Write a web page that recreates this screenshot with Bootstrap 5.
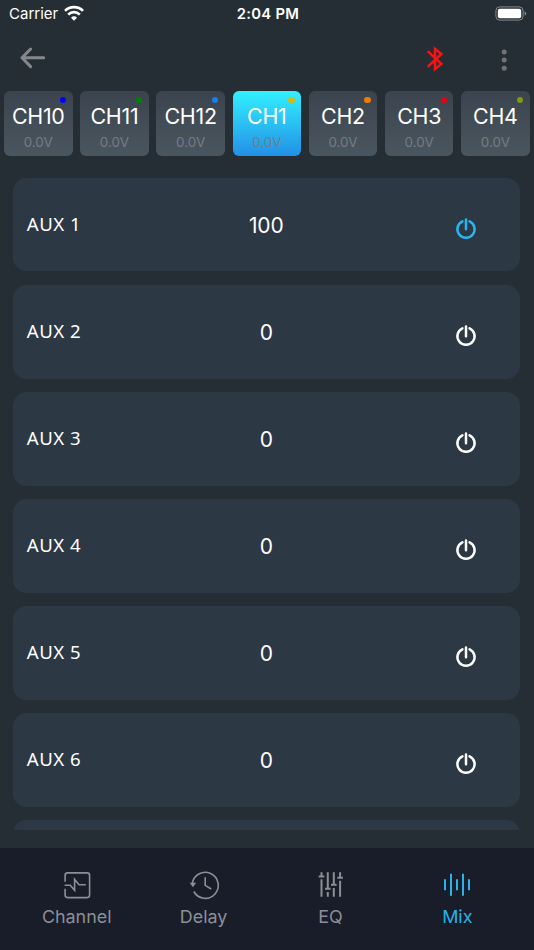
<!DOCTYPE html>
<html lang="en">
<head>
<meta charset="utf-8">
<meta name="viewport" content="width=device-width, initial-scale=1">
<title>Mix</title>
<link href="https://cdn.jsdelivr.net/npm/bootstrap@5.3.0/dist/css/bootstrap.min.css" rel="stylesheet">
<style>
  body { background: #262e35; font-family: Inter, "Liberation Sans", sans-serif; color: #fff; height: 950px; }
  svg { display: block; fill: none; flex: none; }
  .statusbar { height: 28px; padding: 0 7px 0 9px; font-size: 15px; line-height: 28px; }
  .statusbar > div { flex: 1 1 0; }
  .statusbar .clock { font-weight: 600; font-size: 14.8px; letter-spacing: .3px; }
  .wifi { margin-left: 5px; }
  .topbar { height: 62.5px; padding: 0 26px 0 20px; }
  .more { margin-left: 56px; }
  .strip { gap: 7.7px; padding: 0 4px; }
  .ch { width: 68.5px; height: 65px; flex: none; border-radius: 6px; padding-top: 12.8px; background: linear-gradient(#3b444e, #4a565f); }
  .ch.active { background: linear-gradient(#32f0ff, #2390e6); }
  .ch-name { font-size: 21.4px; line-height: 26px; letter-spacing: -.25px; }
  .ch-volt { font-size: 13.4px; line-height: 18px; margin-top: 4px; color: #747d85; }
  .dot { width: 6.4px; height: 6.4px; top: 6.6px; right: 6.4px; }
  .sends { margin: 22.8px 13.6px 0 13.3px; height: 651.7px; }
  .send { height: 93.2px; margin-bottom: 13.85px; border-radius: 13.5px; background: #2d3845; flex: none; }
  .send-name { font-family: "Noto Sans", sans-serif; font-size: 18.6px; letter-spacing: .5px; padding: 0 0 2px 13.5px; width: 186px; }
  .send-val { font-size: 21px; width: 134px; letter-spacing: -.1px; padding-top: 2px; }
  .send svg { margin: 6px 0 0 122px; stroke: #fff; }
  .send.on svg { stroke: #29b6ee; }
  .tabs { height: 102px; background: #181d29; padding: 21px 13.3px 0; color: #8d8f95; font-size: 17.9px; line-height: 24px; }
  .tab { flex: 1 1 0; gap: 4px; color: inherit; text-decoration: none; }
  .tab svg { stroke: currentColor; stroke-width: 1.6; }
  .tab.active { color: #29b3e8; }
</style>
<script src="https://cdn.jsdelivr.net/npm/bootstrap@5.3.0/dist/js/bootstrap.bundle.min.js"></script>
</head>
<body class="d-flex flex-column overflow-hidden">
  <header class="statusbar d-flex align-items-center">
    <div class="d-flex align-items-center"><span>Carrier</span>
      <svg class="wifi" width="22" height="18" viewBox="0 0 22 18" stroke="#fff" stroke-width="2.7"><path d="M2 5.9a12.8 12.8 0 0 1 18 0M5.2 9.6a8.2 8.2 0 0 1 11.6 0"/><path d="M11 15.8l-3-3.1a4.3 4.3 0 0 1 6 0z" fill="#fff" stroke="none"/></svg>
    </div>
    <div class="clock text-center">2:04 PM</div>
    <div class="d-flex justify-content-end">
      <svg width="32" height="16" viewBox="0 0 32 16"><rect x=".9" y=".9" width="27.2" height="13.2" rx="3.8" stroke="#858a8f"/><rect x="2.8" y="2.8" width="23.4" height="9.4" rx="2" fill="#fff"/><path d="M29.6 5.2q1.6.8 1.6 2.3t-1.6 2.3z" fill="#858a8f"/></svg>
    </div>
  </header>

  <nav class="topbar d-flex align-items-center">
    <svg width="26" height="24" viewBox="0 0 26 24" stroke="#85878a" stroke-width="3" stroke-linecap="round" stroke-linejoin="round"><path d="M23.7 10.8H2M10.6 2L2 10.8l8.6 8.8"/></svg>
    <svg class="ms-auto" width="18" height="26" viewBox="0 0 18 26" stroke="#fb1212" stroke-width="2.5"><path d="M1.7 5.1L15.4 18 9 23.2V2.8L15.4 8 1.7 20.9"/></svg>
    <svg class="more" width="8" height="24" viewBox="0 0 8 24"><g fill="#707376"><circle cx="4.2" cy="5" r="2.5"/><circle cx="4.2" cy="13.1" r="2.5"/><circle cx="4.2" cy="21.2" r="2.5"/></g></svg>
  </nav>

  <section class="strip d-flex" id="strip"></section>
  <main class="sends d-flex flex-column overflow-hidden" id="sends"></main>

  <footer class="tabs d-flex mt-auto">
    <a class="tab d-flex flex-column align-items-center">
      <svg width="32" height="32" viewBox="0 0 32 32"><path d="M4.1 12.7V6.4q0-2.5 2.5-2.5h19.5q2.5 0 2.5 2.5v19.7q0 2.5-2.5 2.5H6.6q-2.5 0-2.5-2.5v-6.4M3.6 16.3h5.7l4.3 5V10.3l4.4 5.4h6.8"/></svg>
      <span>Channel</span></a>
    <a class="tab d-flex flex-column align-items-center">
      <svg width="32" height="32" viewBox="0 0 32 32"><path d="M5.8 22.5A13 13 0 1 0 4.3 15M17.2 8.2v8.2l6 3.6"/><path d="M1.8 13.8h6.4l-3.3 4.5z" fill="currentColor" stroke="none"/></svg>
      <span>Delay</span></a>
    <a class="tab d-flex flex-column align-items-center">
      <svg width="32" height="32" viewBox="0 0 32 32"><path stroke-width="2" d="M7.5 3.3v4M7.5 10.3v17.4M13.8 3.3v16.4M13.8 23v4.7M19.8 3.3v12.4M19.8 19v8.7M26.1 3.3v5.4M26.1 11.7v16M4.7 7.4h5.6M11 19.7h5.6M17 15.7h5.6M23.3 8.7h5.6"/></svg>
      <span>EQ</span></a>
    <a class="tab active d-flex flex-column align-items-center">
      <svg width="32" height="32" viewBox="0 0 32 32"><path stroke-width="2" d="M4 10.2v11M10 4.8v22M16 10.2v11M22 4.8v22M28 10.2v11"/></svg>
      <span>Mix</span></a>
  </footer>

<script>
  const channels = [["CH10","blue"],["CH11","green"],["CH12","#1a7df0"],["CH1","#d0bd12"],["CH2","#e87e04"],["CH3","#ec0010"],["CH4","#84980c"]];
  document.getElementById("strip").innerHTML = channels.map(([n, c]) =>
    `<div class="ch position-relative text-center ${n === "CH1" ? "active" : ""}">
      <span class="dot position-absolute rounded-circle" style="background:${c}"></span>
      <div class="ch-name">${n}</div><div class="ch-volt">0.0V</div></div>`).join("");
  const levels = [100, 0, 0, 0, 0, 0];
  // The trailing empty card peeks out at the bottom of the scroll area.
  document.getElementById("sends").innerHTML = levels.map((v, i) =>
    `<div class="send d-flex align-items-center ${v ? "on" : ""}">
      <span class="send-name">AUX ${i + 1}</span><span class="send-val text-center">${v}</span>
      <svg width="22" height="24" viewBox="0 0 22 24" stroke-width="2.5" stroke-linecap="round"><path d="M7.4 5.3a8.6 8.6 0 1 0 7.2 0M11 3.4v9.8"/></svg></div>`).join("") + `<div class="send"></div>`;
</script>
</body>
</html>
